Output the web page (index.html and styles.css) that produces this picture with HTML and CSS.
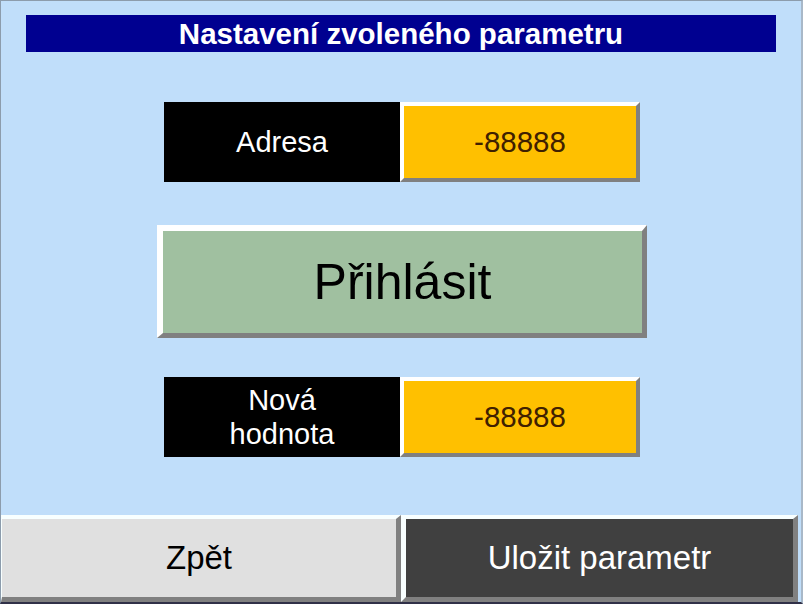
FILE: index.html
```html
<!DOCTYPE html>
<html>
<head>
<meta charset="utf-8">
<link rel="stylesheet" href="styles.css">
</head>
<body>
<div class="screen">
  <div class="title">Nastavení zvoleného parametru</div>
  <div class="row row-first">
    <div class="label">Adresa</div>
    <div class="value">-88888</div>
  </div>
  <div class="login">Přihlásit</div>
  <div class="row row-second">
    <div class="label label-two">Nová<br>hodnota</div>
    <div class="value">-88888</div>
  </div>
  <div class="bottom">
    <div class="btn btn-back">Zpět</div>
    <div class="btn btn-save">Uložit parametr</div>
  </div>
</div>
</body>
</html>
```

FILE: styles.css
```css
html, body {
  margin: 0;
  padding: 0;
}
body {
  font-family: "Liberation Sans", Arial, sans-serif;
  background: #c0defa;
}
.screen {
  box-sizing: border-box;
  width: 803px;
  height: 604px;
  background: #c0defa;
  border-top: 1px solid #8c9cac;
  border-left: 1px solid #8c9cac;
  border-right: 2px solid #a8b8c8;
  border-bottom: 2px solid #303048;
  display: flex;
  flex-direction: column;
}
.title {
  margin: 14px 0 0 25px;
  width: 750px;
  height: 37px;
  background: #000090;
  color: #ffffff;
  font-weight: bold;
  font-size: 29.5px;
  line-height: 37px;
  text-align: center;
}
.row {
  display: flex;
  margin-left: 163px;
  height: 80px;
}
.row-first {
  margin-top: 50px;
}
.row-second {
  margin-top: 39px;
}
.label {
  width: 236px;
  background: #000000;
  color: #ffffff;
  font-size: 29px;
  display: flex;
  align-items: center;
  justify-content: center;
  text-align: center;
}
.label-two {
  line-height: 34px;
}
.value {
  box-sizing: border-box;
  width: 240px;
  background: #ffc000;
  color: #402000;
  font-size: 29.5px;
  border-style: solid;
  border-width: 4px;
  border-color: #ffffff #808080 #808080 #ffffff;
  display: flex;
  align-items: center;
  justify-content: center;
}
.login {
  box-sizing: border-box;
  margin: 43px 0 0 156px;
  width: 490px;
  height: 113px;
  background: #a0c0a0;
  color: #000000;
  font-size: 50px;
  border-style: solid;
  border-width: 6px 5px 5px 6px;
  border-color: #ffffff #808080 #808080 #ffffff;
  display: flex;
  align-items: center;
  justify-content: center;
}
.bottom {
  margin-top: auto;
  display: flex;
  height: 87px;
}
.btn {
  box-sizing: border-box;
  height: 87px;
  font-size: 33px;
  border-style: solid;
  border-width: 4px 5px 5px 5px;
  border-color: #f8ffff #808080 #808080 #f8ffff;
  display: flex;
  align-items: center;
  justify-content: center;
}
.btn-back {
  width: 400px;
  background: #e0e0e0;
  color: #000000;
  border-left-width: 1px;
}
.btn-save {
  width: 397px;
  background: #404040;
  color: #ffffff;
}
```
